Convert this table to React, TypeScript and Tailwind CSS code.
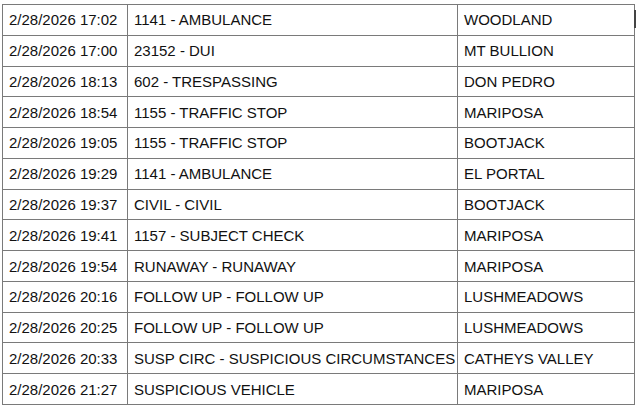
const rows: [string, string, string][] = [
  ["2/28/2026 17:02", "1141 - AMBULANCE", "WOODLAND"],
  ["2/28/2026 17:00", "23152 - DUI", "MT BULLION"],
  ["2/28/2026 18:13", "602 - TRESPASSING", "DON PEDRO"],
  ["2/28/2026 18:54", "1155 - TRAFFIC STOP", "MARIPOSA"],
  ["2/28/2026 19:05", "1155 - TRAFFIC STOP", "BOOTJACK"],
  ["2/28/2026 19:29", "1141 - AMBULANCE", "EL PORTAL"],
  ["2/28/2026 19:37", "CIVIL - CIVIL", "BOOTJACK"],
  ["2/28/2026 19:41", "1157 - SUBJECT CHECK", "MARIPOSA"],
  ["2/28/2026 19:54", "RUNAWAY - RUNAWAY", "MARIPOSA"],
  ["2/28/2026 20:16", "FOLLOW UP - FOLLOW UP", "LUSHMEADOWS"],
  ["2/28/2026 20:25", "FOLLOW UP - FOLLOW UP", "LUSHMEADOWS"],
  ["2/28/2026 20:33", "SUSP CIRC - SUSPICIOUS CIRCUMSTANCES", "CATHEYS VALLEY"],
  ["2/28/2026 21:27", "SUSPICIOUS VEHICLE", "MARIPOSA"],
];

export default function App() {
  return (
    <div className="relative w-[640px] h-[407px] bg-white overflow-hidden pl-[2px] pt-[4px] font-['Liberation_Sans',Arial,sans-serif] text-[15px] text-[#111]">
      <table className="border-collapse table-fixed w-[632px]">
        <colgroup>
          <col className="w-[125px]" />
          <col className="w-[330px]" />
          <col className="w-[177px]" />
        </colgroup>
        <tbody>
          {rows.map((r, i) => (
            <tr key={i} className="h-[30.77px]">
              {r.map((c, j) => (
                <td
                  key={j}
                  className="border border-[#7a7a7a] px-[6px] py-0 align-middle whitespace-nowrap leading-none"
                >
                  {c}
                </td>
              ))}
            </tr>
          ))}
        </tbody>
      </table>
      <div className="absolute left-[634px] top-[10px] w-[2px] h-[18px] bg-[#444]" />
    </div>
  );
}
